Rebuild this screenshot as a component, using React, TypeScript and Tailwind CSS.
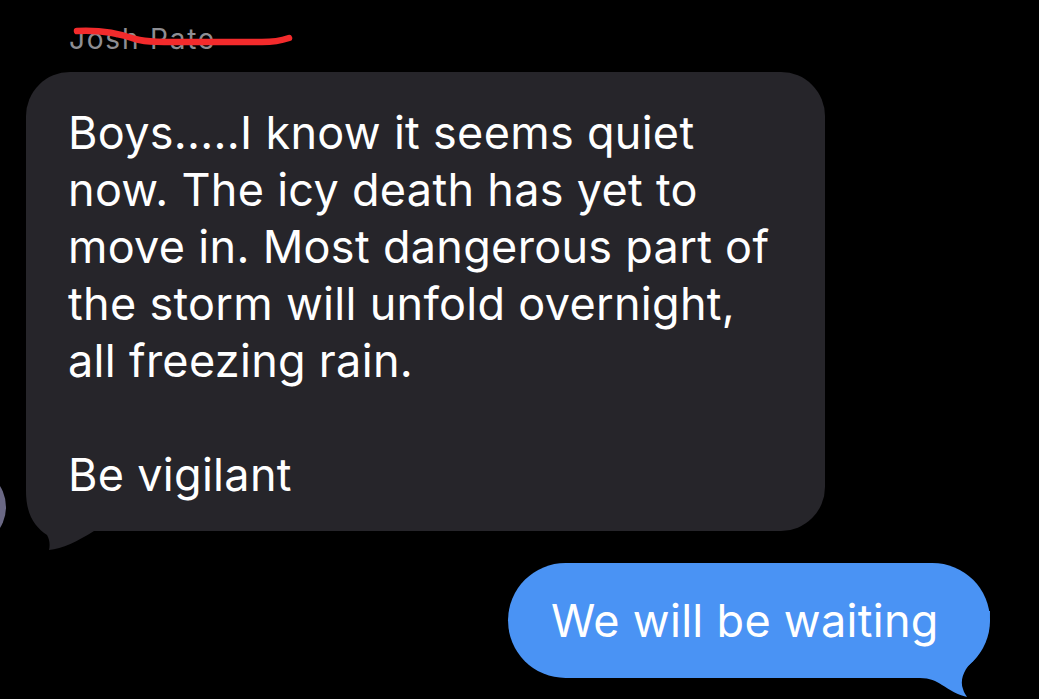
const message = `Boys.....I know it seems quiet
now. The icy death has yet to
move in. Most dangerous part of
the storm will unfold overnight,
all freezing rain.

Be vigilant`;

const IncomingTail = () => (
    <svg
        className="absolute -bottom-[22px] -left-[4px]"
        width="100"
        height="82"
        viewBox="0 0 100 82"
    >
        <path
            d="M4 0 L4 20 C4 44 13 56 25 64 C28 69 28 75 27 79 C40 78 56 70 72 60 L100 60 L100 0 Z"
            fill="#26252a"
        />
    </svg>
);

const OutgoingTail = () => (
    <svg
        className="absolute -right-[2px] -bottom-[21px]"
        width="72"
        height="88"
        viewBox="0 0 72 88"
    >
        <path
            d="M70 0 C70 22 64 40 51 52 C43 60 40 70 43 78 C44 82 46 84 47 86 C38 84 30 79 22 74 C16 70 10 67 0 67 L0 0 Z"
            fill="#4a93f4"
        />
    </svg>
);

const App = () => {
    return (
        <div className="flex h-[699px] w-full flex-col overflow-hidden bg-black font-['Inter',sans-serif]">
            {/* sender name, scribbled out */}
            <div className="relative mt-[22px] ml-[69px] h-[34px] w-fit text-[28px] leading-[34px] tracking-[1.8px] text-[#8e8e93]">
                Josh Pate
                <svg
                    className="absolute -top-[22px] -left-[69px]"
                    width="320"
                    height="70"
                >
                    <path
                        d="M77 31 C95 30 115 32 135 39 C150 43 170 42 200 42 L262 42 C275 42 283 40 289 38"
                        fill="none"
                        stroke="#f32b2c"
                        strokeWidth="6.5"
                        strokeLinecap="round"
                    />
                </svg>
            </div>

            <div className="mt-[16px] flex items-end">
                <div className="-mb-[16px] -ml-[74px] h-[80px] w-[80px] shrink-0 rounded-full bg-[#6a6884]" />
                <div className="relative ml-[20px] w-[799px] rounded-[44px] bg-[#26252a] pt-[32px] pb-[28px] pl-[42px] text-[45px] leading-[57px] tracking-[0.3px] whitespace-pre-line text-white">
                    <IncomingTail />
                    <p className="relative">{message}</p>
                </div>
            </div>

            <div className="mt-[32px] flex justify-end pr-[49px]">
                <div className="relative flex h-[115px] w-[482px] items-center rounded-full bg-[#4a93f4] pl-[43px] text-[45px] tracking-[0.3px] text-white">
                    <OutgoingTail />
                    <span className="relative">We will be waiting</span>
                </div>
            </div>
        </div>
    );
};

export default App;
